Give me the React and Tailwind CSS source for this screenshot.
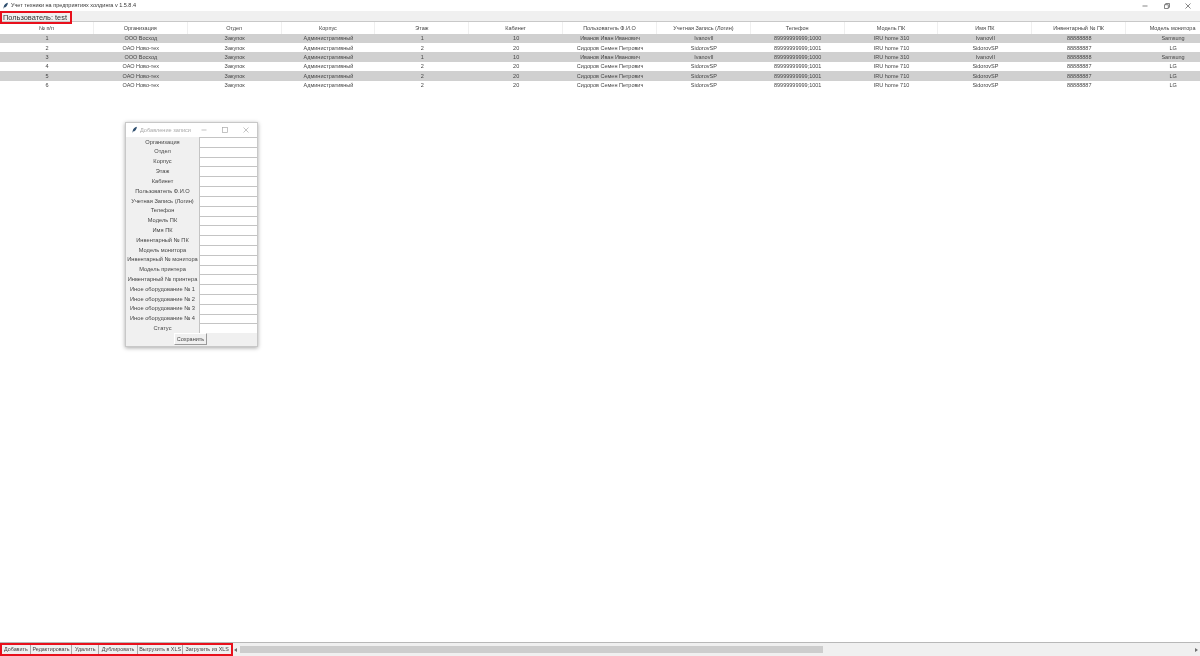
import React from 'react';

const font = "font-['Liberation_Sans',Arial,sans-serif]";

const columns = [
  '№ п/п', 'Организация', 'Отдел', 'Корпус', 'Этаж', 'Кабинет', 'Пользователь Ф.И.О',
  'Учетная Запись (Логин)', 'Телефон', 'Модель ПК', 'Имя ПК', 'Инвентарный № ПК', 'Модель монитора',
];

const ivanov = ['ООО Восход', 'Закупок', 'Административный', '1', '10', 'Иванов Иван Иванович', 'IvanovII', '89999999999;1000', 'IRU home 310', 'IvanovII', '88888888', 'Samsung'];
const sidorov = ['ОАО Ново-тех', 'Закупок', 'Административный', '2', '20', 'Сидоров Семен Петрович', 'SidorovSP', '89999999999;1001', 'IRU home 710', 'SidorovSP', '88888887', 'LG'];

const rows = [
  ['1', ...ivanov],
  ['2', ...sidorov],
  ['3', ...ivanov],
  ['4', ...sidorov],
  ['5', ...sidorov],
  ['6', ...sidorov],
];

const formFields = [
  'Организация', 'Отдел', 'Корпус', 'Этаж', 'Кабинет', 'Пользователь Ф.И.О', 'Учетная Запись (Логин)',
  'Телефон', 'Модель ПК', 'Имя ПК', 'Инвентарный № ПК', 'Модель монитора', 'Инвентарный № монитора',
  'Модель принтера', 'Инвентарный № принтера', 'Иное оборудование № 1', 'Иное оборудование № 2',
  'Иное оборудование № 3', 'Иное оборудование № 4', 'Статус',
];

const actions = [
  ['Добавить', 'w-[29px]'],
  ['Редактировать', 'w-[42px]'],
  ['Удалить', 'w-[27px]'],
  ['Дублировать', 'w-[39px]'],
  ['Выгрузить в XLS', 'w-[46px]'],
  ['Загрузить из XLS', 'w-[48px]'],
];

const Feather = ({ className }) => (
  <svg viewBox="0 0 8 8" className={className}>
    <path d="M6.8 0.2C4.2 0.7 2.2 2.6 1.9 5.2L1.3 7.8L2.3 5.8C4.6 5.6 6.3 3.4 6.8 0.2Z" fill="#2f4f6f" />
  </svg>
);

const TableGrid = () => (
  <div className="flex-1 min-h-0 overflow-hidden bg-white border-b border-[#b8b8b8]">
    <div className="w-[1220px]">
      <div className="grid grid-cols-[repeat(13,1fr)] h-[11.6px] text-[5.5px] text-[#444]">
        {columns.map((c) => (
          <div key={c} className="flex items-center justify-center border-r border-[#efefef] whitespace-nowrap">{c}</div>
        ))}
      </div>
      {rows.map((r, i) => (
        <div
          key={r[0]}
          className={`grid grid-cols-[repeat(13,1fr)] h-[9.4px] text-[5.5px] text-[#444] ${i % 2 === 0 ? 'bg-[#d0d0d0]' : 'bg-white'}`}
        >
          {r.map((v, j) => (
            <div key={j} className="flex items-center justify-center whitespace-nowrap">{v}</div>
          ))}
        </div>
      ))}
    </div>
  </div>
);

const AddDialog = () => (
  <div className="absolute left-[125px] top-[122px] w-[133px] h-[225px] flex flex-col bg-[#f0f0f0] border border-[#c8c8c8] shadow-[0_1px_4px_rgba(0,0,0,0.35)]">
    <div className="h-[14px] shrink-0 bg-white flex items-center pl-[5px]">
      <Feather className="w-[7px] h-[8px] mr-[2px]" />
      <span className="text-[5.6px] text-[#aaa]">Добавление записи</span>
      <div className="ml-auto flex items-center">
        <svg viewBox="0 0 6 6" className="w-[6px] h-[6px] mr-[15px]"><path d="M0.5 3H5.5" stroke="#aaa" strokeWidth="0.7" /></svg>
        <svg viewBox="0 0 6 6" className="w-[6px] h-[6px] mr-[15px]"><rect x="0.5" y="0.5" width="5" height="5" fill="none" stroke="#aaa" strokeWidth="0.7" /></svg>
        <svg viewBox="0 0 6 6" className="w-[6px] h-[6px] mr-[8px]"><path d="M0.5 0.5L5.5 5.5M5.5 0.5L0.5 5.5" stroke="#aaa" strokeWidth="0.7" /></svg>
      </div>
    </div>
    <div className="flex flex-col">
      {formFields.map((f) => (
        <div key={f} className="flex h-[9.82px]">
          <div className="w-[73px] flex items-center justify-center text-[5.7px] text-[#444] whitespace-nowrap">{f}</div>
          <div className="w-[58px] bg-white border-t border-l border-[#c4c4c4]" />
        </div>
      ))}
    </div>
    <div className="flex justify-center">
      <button className="w-[33px] h-[12px] mr-[2px] text-[5.5px] text-[#444] bg-[#f0f0f0] border border-white border-r-[#9a9a9a] border-b-[#9a9a9a]">
        Сохранить
      </button>
    </div>
  </div>
);

const BottomBar = () => (
  <div className="h-[13px] shrink-0 flex bg-[#f0f0f0]">
    <div className="relative w-[233px] shrink-0 flex border-2 border-[#e8101c]">
      {actions.map(([label, w]) => (
        <div
          key={label}
          className={`${w} flex-auto flex items-center justify-center text-[5.4px] text-[#444] whitespace-nowrap border-r border-[#a8a8a8] last:border-r-0`}
        >
          {label}
        </div>
      ))}
    </div>
    <div className="flex-1 flex items-center">
      <span className="w-0 h-0 ml-[1px] border-y-[2px] border-y-transparent border-r-[3px] border-r-[#707070]" />
      <div className="w-[583px] h-[7px] ml-[3px] bg-[#cdcdcd]" />
      <span className="ml-auto mr-[2px] w-0 h-0 border-y-[2px] border-y-transparent border-l-[3px] border-l-[#707070]" />
    </div>
  </div>
);

export default function App() {
  return (
    <div className={`relative w-[1200px] h-[656px] overflow-hidden flex flex-col bg-white blur-[0.25px] ${font}`}>
      {/* window title */}
      <div className="h-[11px] shrink-0 flex items-center pl-[2px] bg-white">
        <Feather className="w-[7px] h-[8px] mr-[2px]" />
        <span className="text-[5.5px] text-[#333]">Учет техники на предприятиях холдинга v 1.5.8.4</span>
        <div className="ml-auto flex items-center">
          <svg viewBox="0 0 6 6" className="w-[6px] h-[6px] mr-[16px]"><path d="M0.5 3H5.5" stroke="#555" strokeWidth="0.7" /></svg>
          <svg viewBox="0 0 6 6" className="w-[6px] h-[6px] mr-[15px]"><path d="M0.5 1.7H4.3V5.5H0.5ZM1.7 1.7V0.5H5.5V4.3H4.3" fill="none" stroke="#555" strokeWidth="0.7" /></svg>
          <svg viewBox="0 0 6 6" className="w-[6px] h-[6px] mr-[9px]"><path d="M0.5 0.5L5.5 5.5M5.5 0.5L0.5 5.5" stroke="#555" strokeWidth="0.7" /></svg>
        </div>
      </div>
      {/* current user */}
      <div className="h-[11px] shrink-0 bg-[#f0f0f0] border-b border-[#c8c8c8] relative">
        <div className="absolute left-0 top-0 w-[72px] h-[13px] border-2 border-[#e8101c] flex items-center pl-[1px] text-[7.4px] text-[#333] whitespace-nowrap">
          Пользователь: test
        </div>
      </div>
      <TableGrid />
      <BottomBar />
      <AddDialog />
    </div>
  );
}
